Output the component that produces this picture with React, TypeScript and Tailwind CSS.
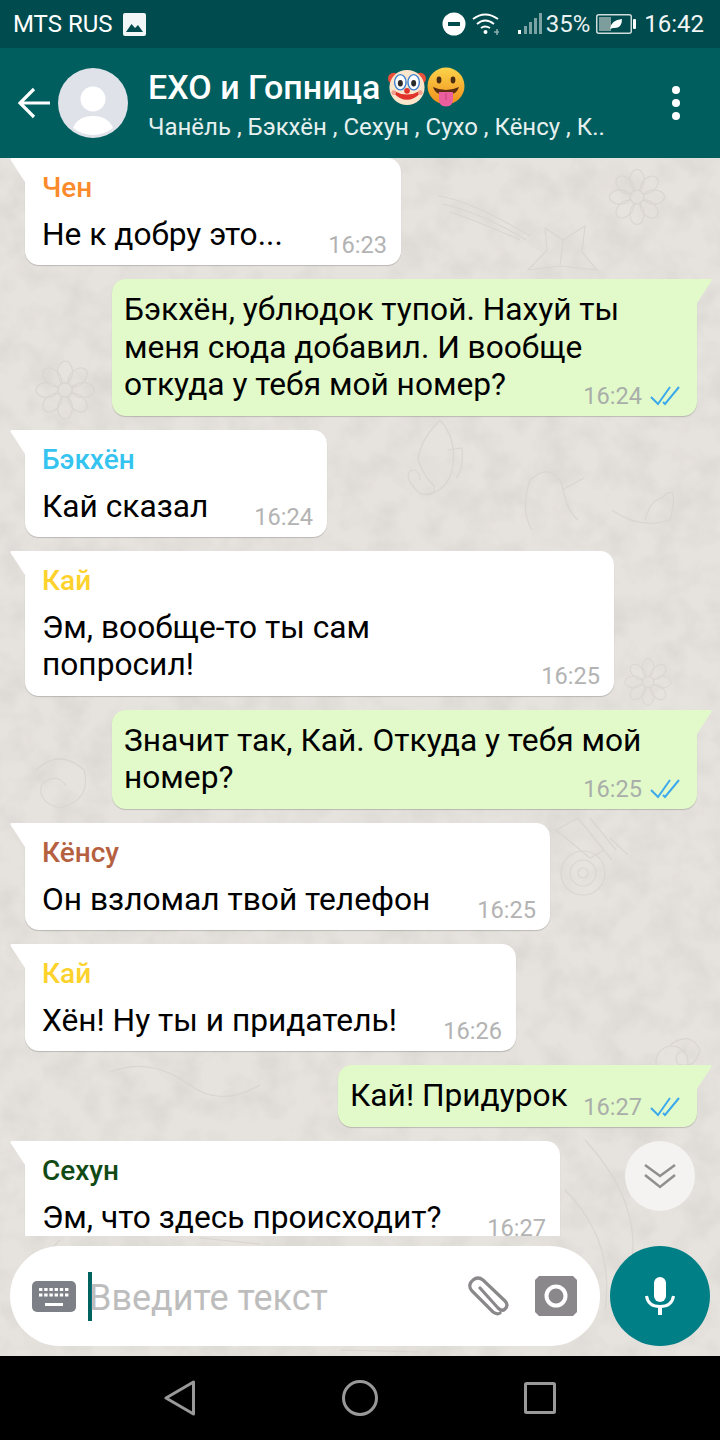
const FONT = 'font-["Roboto",sans-serif]';

type Msg = {
  id: number;
  out?: boolean;
  name?: string;
  nameColor?: string;
  lines: string[];
  time: string;
  width: string;
};

const messages: Msg[] = [
  { id: 1, name: 'Чен', nameColor: 'text-[#fb8a2c]', lines: ['Не к добру это...'], time: '16:23', width: 'w-[376px]' },
  { id: 2, out: true, lines: ['Бэкхён, ублюдок тупой. Нахуй ты', 'меня сюда добавил. И вообще', 'откуда у тебя мой номер?'], time: '16:24', width: 'w-[585px]' },
  { id: 3, name: 'Бэкхён', nameColor: 'text-[#35c4f0]', lines: ['Кай сказал'], time: '16:24', width: 'w-[302px]' },
  { id: 4, name: 'Кай', nameColor: 'text-[#fdd22c]', lines: ['Эм, вообще-то ты сам', 'попросил!'], time: '16:25', width: 'w-[589px]' },
  { id: 5, out: true, lines: ['Значит так, Кай. Откуда у тебя мой', 'номер?'], time: '16:25', width: 'w-[585px]' },
  { id: 6, name: 'Кёнсу', nameColor: 'text-[#b5603f]', lines: ['Он взломал твой телефон'], time: '16:25', width: 'w-[525px]' },
  { id: 7, name: 'Кай', nameColor: 'text-[#fdd22c]', lines: ['Хён! Ну ты и придатель!'], time: '16:26', width: 'w-[491px]' },
  { id: 8, out: true, lines: ['Кай! Придурок'], time: '16:27', width: 'w-[359px]' },
  { id: 9, name: 'Сехун', nameColor: 'text-[#114a14]', lines: ['Эм, что здесь происходит?'], time: '16:27', width: 'w-[535px]' },
];

function Ticks() {
  return (
    <svg width="30" height="20" viewBox="0 0 30 20" fill="none" stroke="#3ba9ec" strokeWidth="2">
      <path d="M1 11 L8 18 L20 1" />
      <path d="M13 16 L15 18 L29 1" />
    </svg>
  );
}

function Bubble({ m }: { m: Msg }) {
  return (
    <div className={`relative shrink-0 ${m.width} ${m.out ? 'self-end mr-[23px] bg-[#e2fac9] rounded-l-[14px] rounded-br-[14px] pl-[12px] pr-[17px]' : 'ml-[25px] bg-white rounded-r-[14px] rounded-bl-[14px] pl-[17px] pr-[14px]'} pt-3 pb-3 shadow-[0_1px_1px_rgba(0,0,0,0.18)]`}>
      {m.out ? (
        <svg className="absolute left-full top-0" width="15" height="24" viewBox="0 0 15 24">
          <path d="M0 0 H13 Q15.5 0 14 2.5 L0 24 Z" fill="#e2fac9" />
        </svg>
      ) : (
        <svg className="absolute right-full top-0" width="15" height="24" viewBox="0 0 15 24">
          <path d="M15 0 H2 Q-0.5 0 1 2.5 L15 24 Z" fill="#ffffff" />
        </svg>
      )}
      {m.name && (
        <div className={`h-[36px] mb-[9.75px] text-[28px] leading-[36px] font-medium ${m.nameColor}`}>{m.name}</div>
      )}
      <div className="flex items-end">
        <div className="flex-1 min-w-0 text-[31.7px] leading-[37.5px] text-black whitespace-nowrap">
          {m.lines.map((l) => (
            <div key={l}>{l}</div>
          ))}
        </div>
        <div className={`flex items-center gap-[8px] -mb-[6px] text-[23.6px] leading-[28px] ${m.out ? 'text-[#a9aeaa]' : 'text-[#b3b3b3]'}`}>
          <span>{m.time}</span>
          {m.out && <Ticks />}
        </div>
      </div>
    </div>
  );
}

function Flower({ x, y, s = 1 }: { x: number; y: number; s?: number }) {
  return (
    <g transform={`translate(${x} ${y}) scale(${s})`}>
      {[0, 45, 90, 135, 180, 225, 270, 315].map((a) => (
        <ellipse key={a} cx="0" cy="-18" rx="7.5" ry="11" transform={`rotate(${a})`} />
      ))}
      <circle r="7" />
    </g>
  );
}

function ChatBackground() {
  return (
    <svg className="absolute inset-0" width="720" height="1198" viewBox="0 158 720 1198" fill="none" stroke="#d9d5cf" strokeWidth="1.2">
      <defs>
        <filter id="marble" x="0" y="0" width="100%" height="100%">
          <feTurbulence type="fractalNoise" baseFrequency="0.035" numOctaves="3" seed="7" />
          <feColorMatrix type="matrix" values="0 0 0 0 0.62  0 0 0 0 0.60  0 0 0 0 0.56  1.6 0 0 0 -0.62" />
        </filter>
      </defs>
      <rect x="0" y="158" width="720" height="1198" filter="url(#marble)" stroke="none" opacity="0.55" />
      <Flower x={65} y={390} />
      <Flower x={637} y={197} s={0.95} />
      <Flower x={648} y={682} s={0.8} />
      {/* feather and star */}
      <path d="M438 196 Q470 200 530 236 M442 204 Q480 212 526 240 M450 212 Q480 222 520 240" />
      <path d="M545 228 L563 240 L585 226 L582 252 L597 270 L560 266 L528 270 L547 250 Z M563 240 L560 266" />
      {/* seahorse */}
      <path d="M440 420 Q420 440 418 460 Q425 478 434 486 Q436 500 418 492 Q402 476 412 470 Q420 470 420 480 M440 420 Q458 440 452 470 Q446 495 420 494 M448 450 L462 448 Q464 470 456 478" />
      {/* bird, egg */}
      <path d="M530 480 Q550 462 562 484 Q566 510 578 520 M530 480 Q520 510 532 530 M562 490 L584 478" />
      <path d="M612 510 Q640 530 670 520 Q680 480 662 498 Q650 500 645 520" />
      {/* machine */}
      <circle cx="583" cy="873" r="22" />
      <circle cx="583" cy="873" r="13" />
      <circle cx="583" cy="873" r="5" />
      <path d="M556 830 L578 818 L604 850 L590 858 Z M578 818 L612 860 M590 818 L616 850 M610 838 L628 855" />
      {/* shell and swirl */}
      <path d="M36 770 Q60 748 84 770 Q92 800 60 808 Q36 802 42 784 Q58 772 66 786" />
      <path d="M670 1045 Q690 1030 700 1050 Q695 1070 678 1064 Q672 1052 686 1050" />
      <circle cx="672" cy="1062" r="16" />
      {/* long leaves behind the scroll button */}
      <path d="M585 1140 Q640 1200 632 1260 Q628 1300 640 1330" />
      <path d="M565 1190 Q615 1240 605 1310" />
      <path d="M110 1072 Q150 1056 190 1085 Q220 1108 260 1085" />
      <path d="M20 1280 L60 1240 M200 1238 L260 1244 M340 1350 L420 1352" />
    </svg>
  );
}

function ClownEmoji() {
  return (
    <svg width="38" height="38" viewBox="0 0 40 40">
      <circle cx="6" cy="11" r="6" fill="#e8503c" />
      <circle cx="34" cy="11" r="6" fill="#e8503c" />
      <circle cx="20" cy="20.5" r="18.5" fill="#fbe6cc" />
      <ellipse cx="13" cy="15" rx="6" ry="8" fill="#fff" stroke="#3a7fd0" strokeWidth="1.5" />
      <ellipse cx="27" cy="15" rx="6" ry="8" fill="#fff" stroke="#3a7fd0" strokeWidth="1.5" />
      <ellipse cx="13" cy="16" rx="2.6" ry="3.4" fill="#2b2b2b" />
      <ellipse cx="27" cy="16" rx="2.6" ry="3.4" fill="#2b2b2b" />
      <path d="M6 25 Q20 40 34 25 Q20 33 6 25 Z" fill="#e0322b" stroke="#e0322b" strokeWidth="2" strokeLinejoin="round" />
      <circle cx="20" cy="24" r="3" fill="#e0322b" />
      <circle cx="6" cy="26" r="2.5" fill="#f2a08f" />
      <circle cx="34" cy="26" r="2.5" fill="#f2a08f" />
    </svg>
  );
}

function TongueEmoji() {
  return (
    <svg width="38" height="40" viewBox="0 0 38 40">
      <defs>
        <linearGradient id="face" x1="0" y1="0" x2="0" y2="1">
          <stop offset="0" stopColor="#fcd34b" />
          <stop offset="1" stopColor="#f08f1b" />
        </linearGradient>
      </defs>
      <circle cx="19" cy="19" r="18.5" fill="url(#face)" />
      <ellipse cx="12" cy="13" rx="2.4" ry="3.4" fill="#4a2c12" />
      <ellipse cx="26" cy="13" rx="2.4" ry="3.4" fill="#4a2c12" />
      <path d="M6 20 Q19 26 32 20 Q30 26 25 27 H13 Q8 26 6 20 Z" fill="#5a2d12" />
      <path d="M12 25 H26 V32 Q26 39.5 19 39.5 Q12 39.5 12 32 Z" fill="#ec5f9e" />
      <path d="M19 26 V33" stroke="#c9407e" strokeWidth="1" />
    </svg>
  );
}

export default function App() {
  return (
    <div className={`w-[720px] h-[1440px] flex flex-col overflow-hidden ${FONT}`}>
      {/* status bar */}
      <div className="h-[48px] shrink-0 flex items-center pl-[13px] pr-[16px] bg-[#004b4d] text-white text-[24px]">
        <span>MTS RUS</span>
        <svg className="ml-[10px]" width="23" height="23" viewBox="0 0 23 23">
          <rect width="23" height="23" rx="2" fill="#f3f6f6" />
          <path d="M3 19 L8.5 11 L12 15 L15 12 L20 19 Z" fill="#004b4d" />
        </svg>
        <div className="flex-1" />
        <svg width="24" height="24" viewBox="0 0 24 24">
          <circle cx="12" cy="12" r="11.5" fill="#fff" />
          <rect x="6" y="10" width="12" height="4" fill="#004b4d" />
        </svg>
        <svg className="ml-[6px]" width="28" height="24" viewBox="0 0 28 24" fill="none" stroke="#fff" strokeWidth="2">
          <path d="M1 7 Q13 -2 26 7" />
          <path d="M5 12 Q13 5 22 12" />
          <path d="M9 16 Q13 13 18 16" />
          <circle cx="13.5" cy="20" r="2" fill="#fff" stroke="none" />
          <path d="M22 20 h5 M25 17 v6" stroke="#8fb0b0" strokeWidth="1.5" />
        </svg>
        <svg className="ml-[18px]" width="25" height="24" viewBox="0 0 25 24" fill="#7ba3a3">
          <rect x="0" y="18" width="3" height="4" fill="#fff" />
          <rect x="6" y="14" width="3" height="8" />
          <rect x="11" y="10" width="3" height="12" />
          <rect x="16" y="6" width="3" height="16" />
          <rect x="21" y="1" width="3" height="21" />
        </svg>
        <span className="ml-[3px] text-[#e9f1f1]">35%</span>
        <svg className="ml-[6px]" width="40" height="22" viewBox="0 0 40 22">
          <rect x="0.75" y="1.75" width="34.5" height="18.5" rx="2" fill="none" stroke="#cfdcdc" strokeWidth="1.5" />
          <rect x="3" y="4" width="12" height="14" fill="#7d9c9c" />
          <path d="M14 16 Q15 7 26 6 Q26 16 17 15 Z" fill="#fff" />
          <rect x="37" y="6" width="3" height="10" rx="1" fill="#fff" />
        </svg>
        <span className="ml-[8px] text-[#f2f6f6]">16:42</span>
      </div>

      {/* header */}
      <div className="h-[110px] shrink-0 flex items-center pl-[18px] bg-[#005e5e] text-white relative z-10">
        <svg width="32" height="32" viewBox="0 0 32 32" fill="none" stroke="#fff" strokeWidth="3.2">
          <path d="M32 16 H3 M16 2 L2 16 L16 30" />
        </svg>
        <svg className="ml-[8px] shrink-0" width="70" height="70" viewBox="0 0 70 70">
          <circle cx="35" cy="35" r="35" fill="#dfe3e9" />
          <circle cx="35" cy="31" r="12.5" fill="#fff" />
          <path d="M15 60 Q20 48 35 48 Q50 48 55 60 Q46 67 35 67 Q24 67 15 60 Z" fill="#fff" />
        </svg>
        <div className="ml-[20px] flex-1 min-w-0 pt-[4px]">
          <div className="h-[40px] flex items-center text-[34px] font-medium">
            <span>EXO и Гопница</span>
            <span className="ml-[8px]"><ClownEmoji /></span>
            <span className="ml-[1px] -mt-[1px]"><TongueEmoji /></span>
          </div>
          <div className="mt-[4px] text-[24px] leading-[32px] text-[#e6f0ef] whitespace-nowrap">
            Чанёль , Бэкхён , Сехун , Сухо , Кёнсу , К..
          </div>
        </div>
        <div className="flex flex-col gap-[5px] mr-[40px]">
          <div className="w-[8px] h-[8px] rounded-full bg-white" />
          <div className="w-[8px] h-[8px] rounded-full bg-white" />
          <div className="w-[8px] h-[8px] rounded-full bg-white" />
        </div>
      </div>

      {/* chat */}
      <div className="relative flex-1 min-h-0 flex flex-col bg-[#e6e2de]">
        <ChatBackground />
        <div className="relative flex-1 min-h-0 flex flex-col gap-[14px] overflow-hidden">
          {messages.map((m) => (
            <Bubble key={m.id} m={m} />
          ))}
        </div>

        <button className="absolute right-[25px] top-[983px] w-[70px] h-[70px] rounded-full bg-[#f5f3f1] flex items-center justify-center">
          <svg width="32" height="26" viewBox="0 0 32 26" fill="none" stroke="#8f8f8f" strokeWidth="2.5">
            <path d="M1 2 L16 13 L31 2" />
            <path d="M1 12 L16 24 L31 12" />
          </svg>
        </button>

        {/* input row */}
        <div className="relative shrink-0 flex gap-[10px] p-[10px]">
          <div className="w-[590px] h-[100px] rounded-full bg-white flex items-center pl-[22px] pr-[23px]">
            <svg width="44" height="31" viewBox="0 0 44 31">
              <rect width="44" height="31" rx="5" fill="#7d8087" />
              <g fill="#fff">
                {[0, 1, 2, 3, 4, 5].map((i) => (
                  <rect key={i} x={7 + i * 5.2} y="7" width="3.4" height="3" />
                ))}
                {[0, 1, 2, 3, 4, 5].map((i) => (
                  <rect key={i} x={7 + i * 5.2} y="12.5" width="3.4" height="3" />
                ))}
                <rect x="13" y="22" width="18" height="3" />
              </g>
            </svg>
            <div className="ml-[12px] w-[4px] h-[49px] bg-[#00635f]" />
            <span className="-ml-[3px] text-[36px] leading-[40px] text-[#bdbdbd] mt-[3px]">Введите текст</span>
            <div className="flex-1" />
            <svg width="42" height="40" viewBox="0 0 42 40" fill="none" stroke="#8a888a" strokeWidth="3.2" strokeLinecap="round">
              <path d="M13 12 L31 32 Q35 36 38 33 Q42 29 38 25 L16 4 Q11 0 6 4 Q0 9 5 15 L26 36 Q30 39 33 37" />
            </svg>
            <svg className="ml-[26px]" width="42" height="40" viewBox="0 0 42 40">
              <path d="M4 0 H38 L42 4 V36 L38 40 H4 L0 36 V4 Z" fill="#8a888a" />
              <circle cx="21" cy="20" r="9.5" fill="#8a888a" stroke="#fff" strokeWidth="4" />
            </svg>
          </div>
          <div className="w-[100px] h-[100px] rounded-full bg-[#017f86] flex items-center justify-center">
            <svg width="30" height="38" viewBox="0 0 30 38" fill="none">
              <rect x="9" y="0" width="12" height="25" rx="6" fill="#fff" />
              <path d="M1.5 19 Q3 29.5 15 29.5 Q27 29.5 28.5 19" stroke="#fff" strokeWidth="3" />
              <rect x="13" y="29" width="4" height="9" fill="#fff" />
            </svg>
          </div>
        </div>
      </div>

      {/* nav bar */}
      <div className="h-[84px] shrink-0 bg-black flex items-center justify-center">
        <svg width="32" height="36" viewBox="0 0 32 36" fill="none" stroke="#999" strokeWidth="3" strokeLinejoin="round">
          <path d="M29.5 2 V34 L2 18 Z" />
        </svg>
        <svg className="ml-[146px]" width="36" height="36" viewBox="0 0 36 36" fill="none" stroke="#999" strokeWidth="3">
          <circle cx="18" cy="18" r="16.5" />
        </svg>
        <svg className="ml-[146px]" width="32" height="32" viewBox="0 0 32 32" fill="none" stroke="#999" strokeWidth="3" strokeLinejoin="round">
          <rect x="1.5" y="1.5" width="29" height="29" rx="1" />
        </svg>
      </div>
    </div>
  );
}
